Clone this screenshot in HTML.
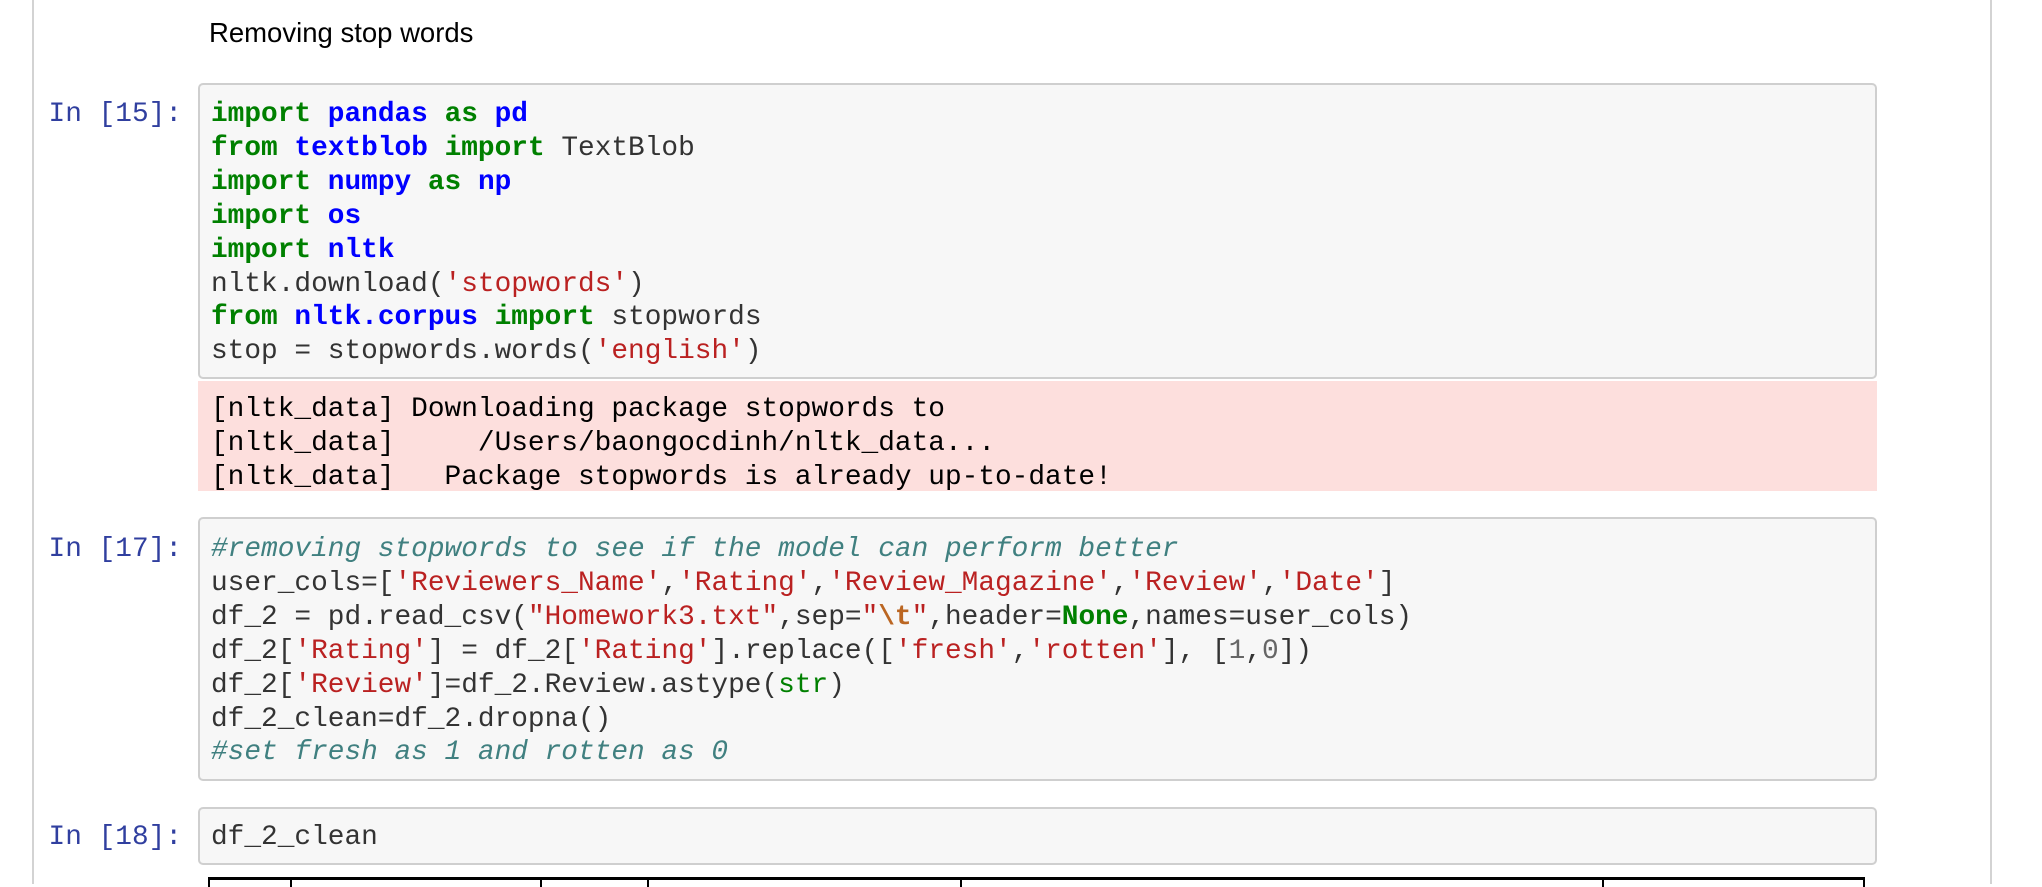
<!DOCTYPE html>
<html><head><meta charset="utf-8"><style>
body{margin:0;width:2042px;height:884px;background:#fff;position:relative;overflow:hidden}
.vl{position:absolute;top:0;height:884px;width:2px;background:#d3d3d3}
.md{position:absolute;left:209px;top:17px;font:27.5px "Liberation Sans",sans-serif;color:#000}
.box{position:absolute;left:198px;width:1675px;border:2px solid #cfcfcf;border-radius:5px;background:#f7f7f7}
.out{position:absolute;left:198px;width:1679px;background:#fddfdd}
pre{margin:0;font:27.8px/33.9px "Liberation Mono",monospace;color:#333;position:absolute;left:211px;white-space:pre}
.p{position:absolute;right:1860px;font:27.8px/33.9px "Liberation Mono",monospace;color:#303f9f;white-space:pre}
.k{color:#008000;font-weight:bold}.n{color:#0000ff;font-weight:bold}.s{color:#ba2121}
.c{color:#408080;font-style:italic}.m{color:#666}.e{color:#bb6622;font-weight:bold}.b{color:#008000}
.tb{position:absolute;top:877px;left:208px;width:1657px;height:3px;background:#000}
.tv{position:absolute;top:877px;height:10px;width:2px;background:#000}
</style></head><body>
<div class="vl" style="left:32px"></div>
<div class="vl" style="left:1990px"></div>
<div class="md">Removing stop words</div>

<div class="box" style="top:83px;height:292px"></div>
<div class="p" style="top:98px">In [15]:</div>
<pre style="top:98px"><span class="k">import</span> <span class="n">pandas</span> <span class="k">as</span> <span class="n">pd</span>
<span class="k">from</span> <span class="n">textblob</span> <span class="k">import</span> TextBlob
<span class="k">import</span> <span class="n">numpy</span> <span class="k">as</span> <span class="n">np</span>
<span class="k">import</span> <span class="n">os</span>
<span class="k">import</span> <span class="n">nltk</span>
nltk.download(<span class="s">'stopwords'</span>)
<span class="k">from</span> <span class="n">nltk.corpus</span> <span class="k">import</span> stopwords
stop = stopwords.words(<span class="s">'english'</span>)</pre>

<div class="out" style="top:381px;height:110px"></div>
<pre style="top:393px;color:#000">[nltk_data] Downloading package stopwords to
[nltk_data]     /Users/baongocdinh/nltk_data...
[nltk_data]   Package stopwords is already up-to-date!</pre>

<div class="box" style="top:517px;height:260px"></div>
<div class="p" style="top:533px">In [17]:</div>
<pre style="top:533px"><span class="c">#removing stopwords to see if the model can perform better</span>
user_cols=[<span class="s">'Reviewers_Name'</span>,<span class="s">'Rating'</span>,<span class="s">'Review_Magazine'</span>,<span class="s">'Review'</span>,<span class="s">'Date'</span>]
df_2 = pd.read_csv(<span class="s">"Homework3.txt"</span>,sep=<span class="s">"</span><span class="e">\t</span><span class="s">"</span>,header=<span class="k">None</span>,names=user_cols)
df_2[<span class="s">'Rating'</span>] = df_2[<span class="s">'Rating'</span>].replace([<span class="s">'fresh'</span>,<span class="s">'rotten'</span>], [<span class="m">1</span>,<span class="m">0</span>])
df_2[<span class="s">'Review'</span>]=df_2.Review.astype(<span class="b">str</span>)
df_2_clean=df_2.dropna()
<span class="c">#set fresh as 1 and rotten as 0</span></pre>

<div class="box" style="top:807px;height:54px"></div>
<div class="p" style="top:821px">In [18]:</div>
<pre style="top:821px">df_2_clean</pre>

<div class="tb"></div>
<div class="tv" style="left:208px"></div>
<div class="tv" style="left:290px"></div>
<div class="tv" style="left:540px"></div>
<div class="tv" style="left:647px"></div>
<div class="tv" style="left:960px"></div>
<div class="tv" style="left:1602px"></div>
<div class="tv" style="left:1863px"></div>
</body></html>
